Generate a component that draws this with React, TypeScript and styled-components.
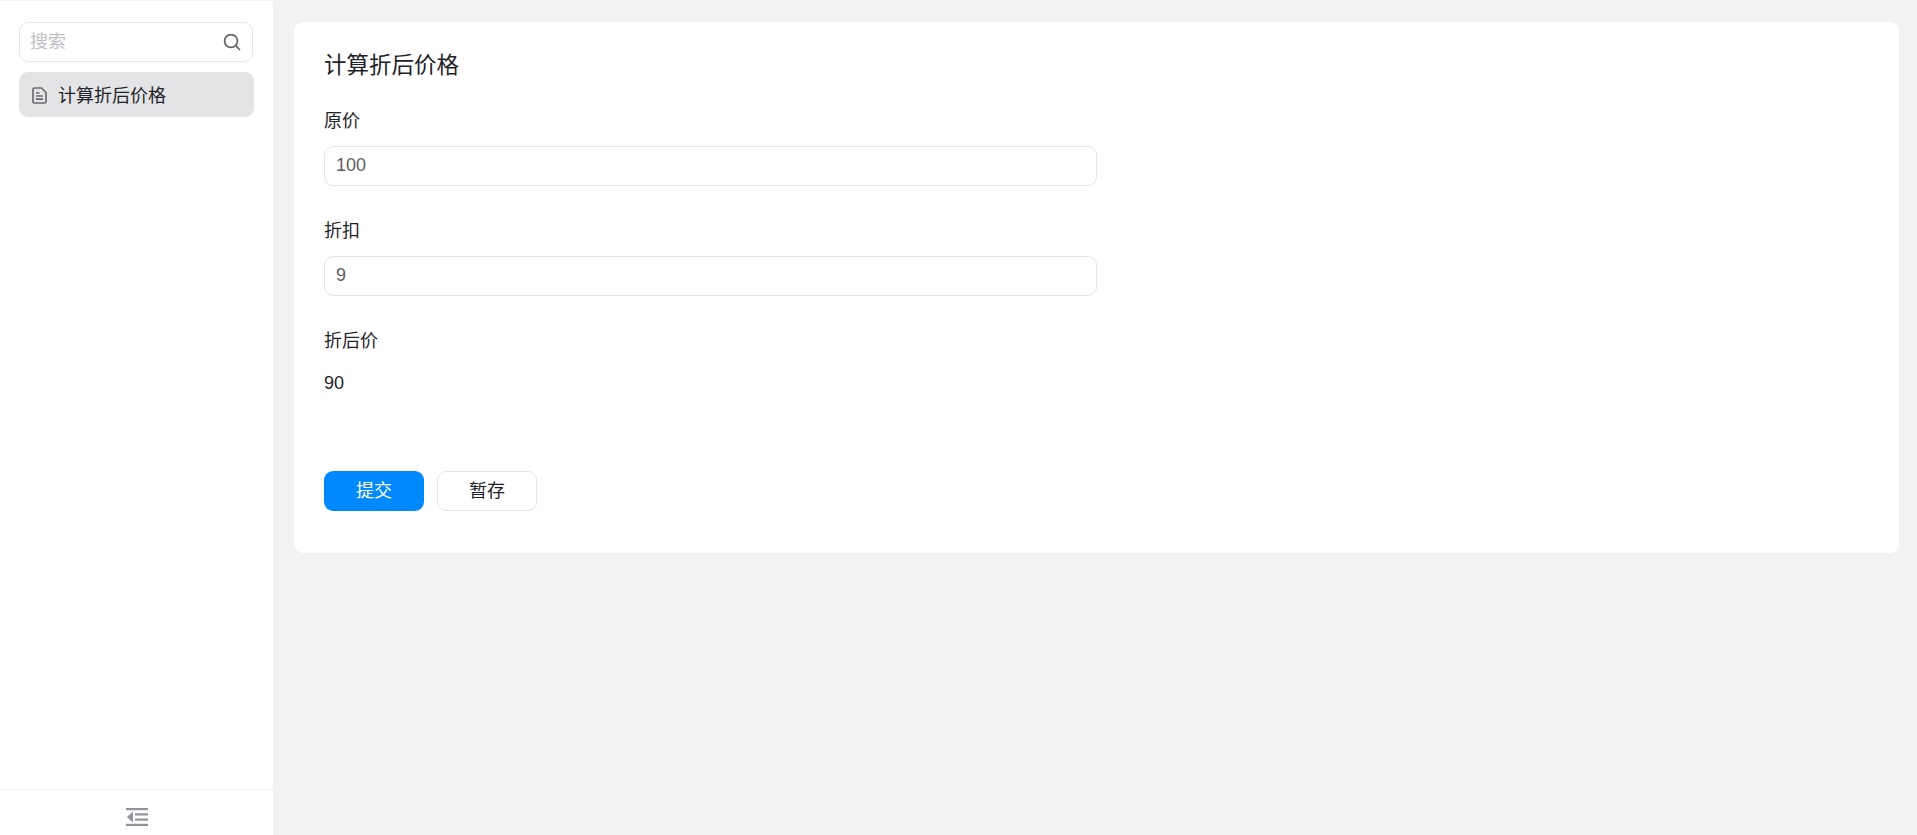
import React from 'react';
import styled, { createGlobalStyle } from 'styled-components';

const GlobalStyle = createGlobalStyle`
  html, body, #root {
    height: 100%;
    margin: 0;
  }

  body {
    background: #f1f2f4;
    color: #1f2329;
    font-family: "Liberation Sans", "Noto Sans CJK SC", sans-serif;
    font-size: 18px;
    overflow: hidden;
  }

  * {
    box-sizing: border-box;
  }
`;

const Layout = styled.div`
  display: flex;
  height: 835px;
  padding-top: 1px;
`;

const Sidebar = styled.aside`
  background: #fff;
  display: flex;
  flex-direction: column;
  flex: 0 0 273px;
`;

const SideBody = styled.div`
  flex: 1;
  padding: 21px 19px 0;
`;

const SearchBox = styled.div`
  align-items: center;
  border: 1px solid #e4e5e7;
  border-radius: 9px;
  display: flex;
  height: 40px;
  justify-content: space-between;
  padding: 0 11px 0 10px;
  width: 234px;
`;

const SearchPlaceholder = styled.span`
  color: #bfc1c5;
  line-height: 38px;
`;

const MenuItem = styled.div`
  align-items: center;
  background: #e3e4e6;
  border-radius: 9px;
  display: flex;
  gap: 11px;
  height: 45px;
  margin-top: 10px;
  padding: 0 0 2px 13px;
  width: 235px;

  svg {
    margin-top: 4px;
  }
`;

const SideFooter = styled.div`
  border-top: 1px solid #f0f1f2;
  display: flex;
  flex: 0 0 46px;
  justify-content: center;
  padding-top: 18px;
`;

const Main = styled.main`
  flex: 1;
  padding: 21px 18px 0 21px;
`;

const Card = styled.section`
  background: #fff;
  border-radius: 9px;
  height: 531px;
  padding: 28px 30px 0;
`;

const Title = styled.h1`
  font-size: 22.5px;
  font-weight: 400;
  line-height: 32px;
  margin: 0 0 25px;
`;

const Field = styled.div`
  margin-bottom: 31px;
`;

const Label = styled.div`
  line-height: 27px;
  margin-bottom: 11px;
  padding-top: 1px;
`;

const Input = styled.input`
  border: 1px solid #e4e5e7;
  border-radius: 9px;
  color: #5f6064;
  display: block;
  font: inherit;
  height: 40px;
  outline: none;
  padding: 0 10px 2px 11px;
  width: 773px;
`;

const Value = styled.div`
  line-height: 27px;
  margin-top: 15px;
`;

const Actions = styled.div`
  display: flex;
  gap: 13px;
  margin-top: 74px;
`;

const Button = styled.button<{ $primary?: boolean }>`
  background: ${({ $primary }) => ($primary ? '#0089ff' : '#fff')};
  border: ${({ $primary }) => ($primary ? '0' : '1px solid #e4e5e7')};
  border-radius: 9px;
  color: ${({ $primary }) => ($primary ? '#fff' : '#1f2329')};
  font: inherit;
  height: 40px;
  padding: 0 0 4px;
  width: 100px;
`;

function App (): React.ReactElement {
  return (
    <>
      <GlobalStyle />
      <Layout>
        <Sidebar>
          <SideBody>
            <SearchBox>
              <SearchPlaceholder>搜索</SearchPlaceholder>
              <svg width='18' height='18' viewBox='0 0 18 18' fill='none' stroke='#5f6368' strokeWidth='1.7'>
                <circle cx='8' cy='8' r='6.4' />
                <path d='M12.6 12.6 L17 17' />
              </svg>
            </SearchBox>
            <MenuItem>
              <svg width='15' height='17' viewBox='0 0 15 17' fill='none' stroke='#6b6d70' strokeWidth='1.7'>
                <path d='M1 2.2 a1.2 1.2 0 0 1 1.2 -1.2 H9.5 L14 5.5 V14.8 a1.2 1.2 0 0 1 -1.2 1.2 H2.2 a1.2 1.2 0 0 1 -1.2 -1.2 Z' />
                <path d='M4 6 H7.5 M4 9 H11 M4 12.2 H11' />
              </svg>
              <span>计算折后价格</span>
            </MenuItem>
          </SideBody>
          <SideFooter>
            <svg width='22' height='18' viewBox='0 0 22 18' fill='#8f9499'>
              <rect x='0' y='0' width='22' height='2.2' />
              <rect x='9' y='5.3' width='13' height='2.2' />
              <rect x='9' y='10.5' width='13' height='2.2' />
              <rect x='0' y='15.8' width='22' height='2.2' />
              <path d='M7 3.5 V14.5 L1 9 Z' />
            </svg>
          </SideFooter>
        </Sidebar>
        <Main>
          <Card>
            <Title>计算折后价格</Title>
            <Field>
              <Label>原价</Label>
              <Input defaultValue='100' />
            </Field>
            <Field>
              <Label>折扣</Label>
              <Input defaultValue='9' />
            </Field>
            <Field>
              <Label>折后价</Label>
              <Value>90</Value>
            </Field>
            <Actions>
              <Button $primary>提交</Button>
              <Button>暂存</Button>
            </Actions>
          </Card>
        </Main>
      </Layout>
    </>
  );
}

export default App;
